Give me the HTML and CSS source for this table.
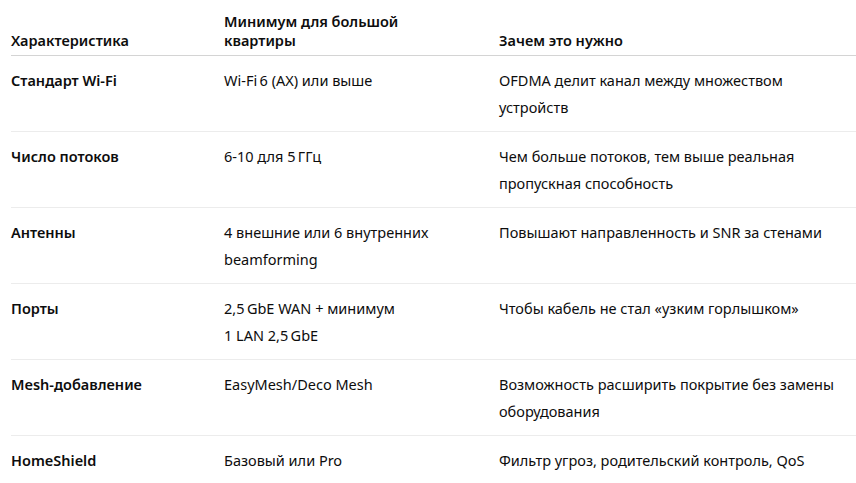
FILE: index.html
```html
<!DOCTYPE html>
<html lang="ru">
<head>
<meta charset="utf-8">
<link rel="stylesheet" href="styles.css">
</head>
<body>
<div class="wrap">
<table class="spec">
  <colgroup>
    <col class="c1">
    <col class="c2">
    <col class="c3">
  </colgroup>
  <thead>
    <tr>
      <th>Характеристика</th>
      <th>Минимум для большой квартиры</th>
      <th>Зачем это нужно</th>
    </tr>
  </thead>
  <tbody>
    <tr>
      <td class="name">Стандарт Wi‑Fi</td>
      <td>Wi‑Fi&#8239;6 (AX) или выше</td>
      <td>OFDMA делит канал между множеством устройств</td>
    </tr>
    <tr>
      <td class="name">Число потоков</td>
      <td>6‑10 для 5&#8239;ГГц</td>
      <td>Чем больше потоков, тем выше реальная пропускная способность</td>
    </tr>
    <tr>
      <td class="name">Антенны</td>
      <td>4 внешние или 6 внутренних beamforming</td>
      <td>Повышают направленность и SNR за стенами</td>
    </tr>
    <tr>
      <td class="name">Порты</td>
      <td>2,5&#8239;GbE WAN + минимум 1&nbsp;LAN 2,5&#8239;GbE</td>
      <td>Чтобы кабель не стал «узким горлышком»</td>
    </tr>
    <tr>
      <td class="name">Mesh‑добавление</td>
      <td>EasyMesh/Deco Mesh</td>
      <td>Возможность расширить покрытие без замены оборудования</td>
    </tr>
    <tr>
      <td class="name">HomeShield</td>
      <td>Базовый или Pro</td>
      <td>Фильтр угроз, родительский контроль, QoS</td>
    </tr>
  </tbody>
</table>
</div>
</body>
</html>
```

FILE: styles.css
```css
html, body {
  margin: 0;
  padding: 0;
  background: #ffffff;
}
body {
  font-family: "Noto Sans", "Open Sans", sans-serif;
  font-size: 14.5px;
  color: #0d0d0d;
  overflow: hidden;
}
.wrap {
  padding-left: 11px;
}
.spec {
  border-collapse: collapse;
  table-layout: fixed;
  width: 845px;
}
.c1 { width: 213px; }
.c2 { width: 275px; }
.c3 { width: 357px; }
.spec th {
  text-align: left;
  vertical-align: bottom;
  font-weight: 600;
  line-height: 19px;
  padding: 12px 0 5px 0;
  border-bottom: 1px solid #d4d4d4;
}
.spec th:nth-child(2),
.spec td:nth-child(2) {
  padding-right: 66px;
}
.spec th:nth-child(3),
.spec td:nth-child(3) {
  padding-right: 16px;
}
.spec td {
  vertical-align: top;
  line-height: 27px;
  padding: 11px 0 10px 0;
  border-bottom: 1px solid #ececec;
}
.spec td.name {
  font-weight: 600;
}
```
